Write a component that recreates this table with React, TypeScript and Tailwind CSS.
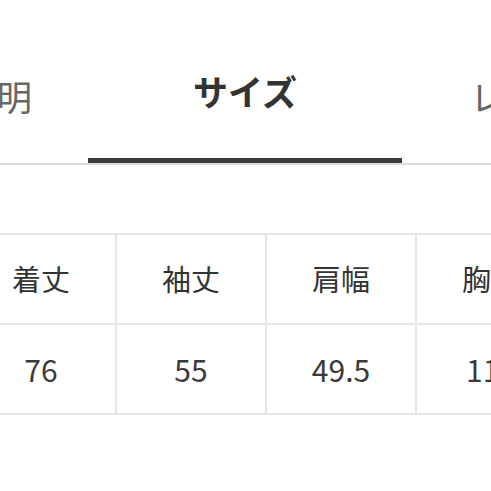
import React from 'react';

const columns = [
  { label: '着丈', value: '76' },
  { label: '袖丈', value: '55' },
  { label: '肩幅', value: '49.5' },
  { label: '胸囲', value: '116' },
];

export default function App() {
  return (
    <div
      className="h-[491px] w-[491px] overflow-hidden bg-white text-[#333]"
      style={{ fontFamily: '"Noto Sans CJK JP", "Noto Sans", sans-serif' }}
    >
      {/* tabs */}
      <div className="mt-[70px] border-b-2 border-[#dcdcdc]">
        <div className="flex items-end whitespace-nowrap">
          <span className="ml-[-108px] shrink-0 pb-[46px] text-[35px] leading-[42px] text-[#666]">商品説明</span>
          <div className="ml-[56px] flex w-[314px] shrink-0 flex-col items-center">
            <span className="pb-[46px] text-[35px] font-bold leading-[42px] text-[#333]">サイズ</span>
            <div className="h-[5px] w-full bg-[#3a3a3a]" />
          </div>
          <span className="ml-[68px] shrink-0 pb-[46px] text-[35px] leading-[42px] text-[#666]">レビュー</span>
        </div>
      </div>

      {/* size table */}
      <div className="mt-[68px] ml-[-35px] w-max">
        <div className="grid grid-cols-[repeat(4,148px)] gap-[2px] border-2 border-[#e6e6e6] bg-[#e6e6e6]">
          {columns.map((c) => (
            <div key={c.label} className="flex h-[88px] items-center justify-center bg-white text-[29px] text-[#333]">
              {c.label}
            </div>
          ))}
          {columns.map((c) => (
            <div key={c.label + c.value} className="flex h-[88px] items-center justify-center bg-white text-[30px] text-[#3a3a3a]">
              {c.value}
            </div>
          ))}
        </div>
      </div>
    </div>
  );
}
